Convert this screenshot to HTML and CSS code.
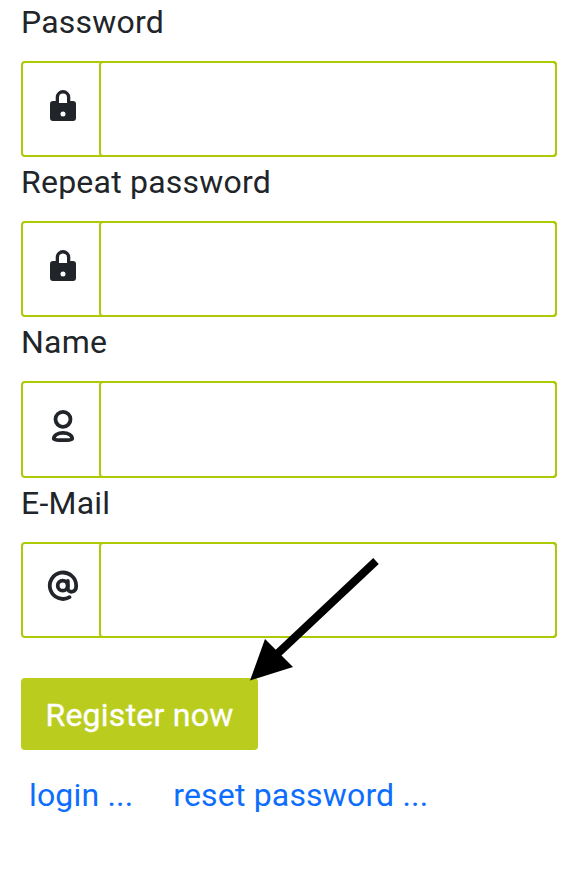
FILE: index.html
```html
<!DOCTYPE html>
<html lang="en"><head><meta charset="utf-8"><title>Register</title><link rel="stylesheet" href="styles.css"></head>
<body>
<form class="form">
<label class="label" for="pw">Password</label>
<div class="group"><span class="addon"><svg class="icon" viewBox="0 0 32 34"><path fill-rule="evenodd" d="M6 12h2.700V8.300a7.300 7.300 0 0 1 14.600 0V12H26a3 3 0 0 1 3 3v14a3 3 0 0 1-3 3H6a3 3 0 0 1-3-3V15a3 3 0 0 1 3-3Zm6 2h8V8.500a4 4 0 0 0-8 0ZM16 22.400a2.500 2.500 0 1 0 0 5 2.500 2.500 0 0 0 0-5Z"/></svg></span><input class="input" id="pw" type="password"></div>
<label class="label" for="pw2">Repeat password</label>
<div class="group"><span class="addon"><svg class="icon" viewBox="0 0 32 34"><path fill-rule="evenodd" d="M6 12h2.700V8.300a7.300 7.300 0 0 1 14.600 0V12H26a3 3 0 0 1 3 3v14a3 3 0 0 1-3 3H6a3 3 0 0 1-3-3V15a3 3 0 0 1 3-3Zm6 2h8V8.500a4 4 0 0 0-8 0ZM16 22.400a2.500 2.500 0 1 0 0 5 2.500 2.500 0 0 0 0-5Z"/></svg></span><input class="input" id="pw2" type="password"></div>
<label class="label" for="name">Name</label>
<div class="group group-tall"><span class="addon"><svg class="icon outline" viewBox="0 0 32 34"><circle cx="16" cy="10.300" r="7.500"/><path d="M6.800 29.800c0-3.500 4-6 9.200-6s9.200 2.500 9.200 6c-2 1.800-16.400 1.800-18.400 0Z"/></svg></span><input class="input" id="name"></div>
<label class="label" for="mail">E-Mail</label>
<div class="group"><span class="addon"><svg class="icon outline" viewBox="0 0 32 34"><circle cx="15.700" cy="15.700" r="5"/><path d="M20.800 10.800v7.600c0 4.800 8.400 5 8.400-2.700A13.200 13.200 0 1 0 22.500 27.200"/></svg></span><input class="input" id="mail"></div>
<div class="actions"><button class="button" type="button">Register now</button>
<svg class="pointer" viewBox="0 0 130 125"><path d="M126 4 25 99" stroke="#000" stroke-width="8"/><path d="M0 123.500 15 82 43 110Z"/></svg></div>
<nav class="links"><a href="#">login ...</a><a href="#">reset password ...</a></nav>
</form>
</body></html>
```
FILE: styles.css
```css
* { box-sizing: border-box; }
body { margin: 0; background: #fff; color: #212529; font: 32px/48px Roboto, "Liberation Sans", sans-serif; letter-spacing: .22px; }
.form { padding: 0 23px 0 21px; }
.label { display: block; height: 63px; margin-top: -2px; }
.group { display: flex; height: 96px; margin-bottom: 3px; border: 2px solid #aec905; border-radius: 4px; }
.group-tall { height: 97px; }
.addon { width: 78px; display: flex; justify-content: center; padding: 26px 0 0 2px; }
.icon { width: 32px; height: 34px; fill: #212529; }
.outline { fill: none; stroke: #212529; stroke-width: 3.8; stroke-linecap: round; stroke-linejoin: round; }
.input { flex: 1; min-width: 0; margin: -2px; border: 2px solid #aec905; border-radius: 4px; background: none; outline: 0; }
.actions { position: relative; margin-top: 40px; }
.button { display: block; width: 237px; height: 72px; padding: 1px 0 0; border: 0; border-radius: 4px; background: #bacd1e; color: #fff; font: inherit; letter-spacing: .25px; -webkit-text-stroke: .35px #fff; }
.pointer { position: absolute; left: 229px; top: -121px; width: 130px; height: 125px; }
.links { display: flex; gap: 40px; padding: 21px 8px; }
.links a { color: #0d6efd; text-decoration: none; letter-spacing: .17px; }
```
